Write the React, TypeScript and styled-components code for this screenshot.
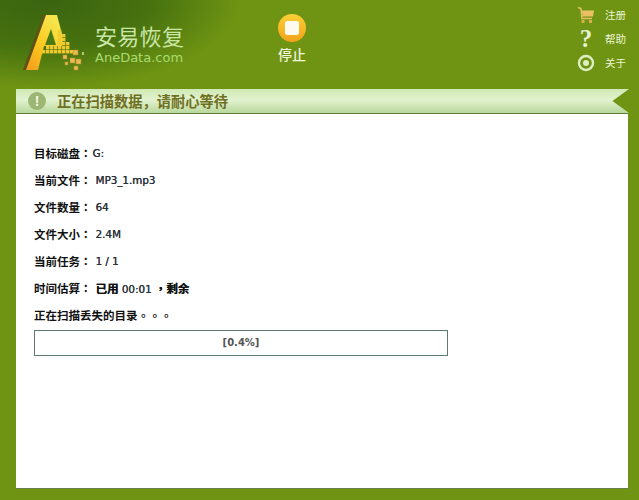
import { createGlobalStyle, styled } from 'styled-components';
import * as React from 'react';

const GlobalStyle = createGlobalStyle`
  html, body {
    margin: 0;
    padding: 0;
    background: #6f9413;
  }
`;

const CJK = `"Noto Sans CJK SC", "Liberation Sans", sans-serif`;
const CJK_TC = `"Noto Sans CJK TC", "Noto Sans CJK SC", sans-serif`;

// the right leg of the A breaks up into a grid of small squares
const GRID: [number, number][] = [
  [58, 30], [58, 34], [62, 34], [58, 38], [62, 38], [58, 42], [62, 42], [66, 42],
  [46, 46], [50, 46], [54, 46], [58, 46], [62, 46], [66, 46], [42, 50], [46, 50], [50, 50], [54, 50], [58, 50], [62, 50], [66, 50], [70, 50],
];

const SCATTER: [number, number, number][] = [
  [73, 50, 5], [63, 55, 4], [70, 58, 5], [76, 59, 5], [65, 62, 3], [74, 66, 4],
];

const LogoMark = () => (
  <LogoSvg viewBox="0 0 84 72" width="84" height="72">
    <defs>
      <linearGradient id="logoFill" x1="0" y1="1" x2="0.6" y2="0">
        <stop offset="0" stopColor="#f49a1e" />
        <stop offset="0.5" stopColor="#fbc81e" />
        <stop offset="1" stopColor="#f6e44c" />
      </linearGradient>
    </defs>
    <path d="M23 70 L43 15 L48 15 L28 70 Z" fill="#5e5216" />
    <path d="M26 70 L46 15 L57 15 L62 34 L62 46 L44 46 L38 70 Z" fill="url(#logoFill)" />
    <path d="M45 45 L51 29 L56 45 Z" fill="#4c7a12" />
    {GRID.map(([x, y]) => (
      <rect key={`${x}-${y}`} x={x} y={y} width={3.4} height={3.4} fill="#f2c92c" />
    ))}
    {SCATTER.map(([x, y, s]) => (
      <rect key={`${x}-${y}`} x={x} y={y} width={s} height={s} fill="#ecb850" stroke="#a9912f" strokeWidth="0.5" />
    ))}
    <rect x="82" y="52" width="2" height="3" fill="#b7c96a" />
  </LogoSvg>
);

const CartIcon = () => (
  <svg viewBox="0 0 18 18" width="18" height="18">
    <path d="M1 1.5 L4 2.5 L5 12.5 L15 12.5" fill="none" stroke="#e6c063" strokeWidth="1.6" />
    <path d="M5 4.5 H17 L16 10.5 H5.5 Z" fill="#e9c164" />
    <rect x="4.5" y="14" width="3" height="3" fill="#d9ae4e" />
    <rect x="12" y="14" width="3" height="3" fill="#d9ae4e" />
  </svg>
);

const HelpIcon = () => <HelpGlyph>?</HelpGlyph>;

const AboutIcon = () => (
  <svg viewBox="0 0 18 18" width="18" height="18">
    <circle cx="9" cy="9" r="7" fill="none" stroke="#dfeec2" strokeWidth="2.4" />
    <circle cx="9" cy="9" r="3" fill="#dfeec2" />
  </svg>
);

const INFO_ROWS: { label: string; value: string; gap?: boolean }[] = [
  { label: '目标磁盘：', value: 'G:' },
  { label: '当前文件：', value: 'MP3_1.mp3', gap: true },
  { label: '文件数量：', value: '64', gap: true },
  { label: '文件大小：', value: '2.4M', gap: true },
  { label: '当前任务：', value: '1 / 1', gap: true },
];

const App: React.FC = () => {
  return (
    <Page>
      <GlobalStyle />
      <Header>
        <Brand>
          <LogoMark />
          <BrandText>
            <BrandName>安易恢复</BrandName>
            <BrandUrl>AneData.com</BrandUrl>
          </BrandText>
        </Brand>
        <StopButton>
          <StopCircle>
            <StopSquare />
          </StopCircle>
          <StopLabel>停止</StopLabel>
        </StopButton>
        <SideMenu>
          <MenuItem>
            <MenuIcon>
              <CartIcon />
            </MenuIcon>
            注册
          </MenuItem>
          <MenuItem>
            <MenuIcon>
              <HelpIcon />
            </MenuIcon>
            帮助
          </MenuItem>
          <MenuItem>
            <MenuIcon>
              <AboutIcon />
            </MenuIcon>
            关于
          </MenuItem>
        </SideMenu>
      </Header>
      <Banner>
        <Notice>!</Notice>
        <BannerText>正在扫描数据，请耐心等待</BannerText>
      </Banner>
      <Panel>
        {INFO_ROWS.map((row) => (
          <Row key={row.label}>
            <Label>{row.label}</Label>
            <Value $gap={row.gap}>{row.value}</Value>
          </Row>
        ))}
        <Row>
          <Label>时间估算：</Label>
          <Value $gap>
            <Label>已用</Label> 00:01 <Label>，剩余</Label>
          </Value>
        </Row>
        <Row>
          <Label>正在扫描丢失的目录。。。</Label>
        </Row>
        <Progress>[0.4%]</Progress>
      </Panel>
    </Page>
  );
};

const Page = styled.div`
  width: 639px;
  height: 500px;
  overflow: hidden;
  display: flex;
  flex-direction: column;
  background: #6f9413;
`;

const Header = styled.header`
  height: 89px;
  flex-shrink: 0;
  box-sizing: border-box;
  display: flex;
  align-items: flex-start;
  background:
    radial-gradient(ellipse 195px 88px at 45px 0, #3a6410 0%, #47720f 55%, rgba(111, 148, 19, 0) 100%),
    #6f9413;
`;

const Brand = styled.div`
  width: 264px;
  display: flex;
`;

const LogoSvg = styled.svg`
  flex-shrink: 0;
  width: 84px;
  height: 72px;
`;

const BrandText = styled.div`
  margin-left: 11px;
  padding-top: 21px;
  display: flex;
  flex-direction: column;
`;

const BrandName = styled.div`
  color: #c9e6a4;
  font: 400 22px / 28px ${CJK};
  letter-spacing: 0.3px;
  white-space: nowrap;
`;

const BrandUrl = styled.div`
  color: #a9dc72;
  font: 400 13px / 15px 'DejaVu Sans', sans-serif;
  margin-top: 1px;
  white-space: nowrap;
`;

const StopButton = styled.div`
  width: 56px;
  padding-top: 14px;
  display: flex;
  flex-direction: column;
  align-items: center;
`;

const StopCircle = styled.div`
  width: 28px;
  height: 28px;
  box-sizing: border-box;
  border-radius: 50%;
  display: flex;
  align-items: center;
  justify-content: center;
  background: linear-gradient(180deg, #fbd036 0%, #f2a31a 100%);
`;

const StopSquare = styled.div`
  width: 14px;
  height: 14px;
  border-radius: 2px;
  background: #fdfbf0;
`;

const StopLabel = styled.div`
  margin-top: 3px;
  color: #f2f6dc;
  font: 500 14px / 18px ${CJK};
`;

const SideMenu = styled.nav`
  margin-left: auto;
  width: 50px;
  margin-right: 12px;
  padding-top: 3px;
  display: flex;
  flex-direction: column;
`;

const MenuItem = styled.div`
  height: 24px;
  display: flex;
  align-items: center;
  color: #eef4d6;
  font: 400 10.5px / 24px ${CJK};
  white-space: nowrap;
`;

const MenuIcon = styled.span`
  width: 18px;
  height: 18px;
  margin-right: 10px;
  display: flex;
  align-items: center;
  justify-content: center;
  flex-shrink: 0;
`;

const HelpGlyph = styled.span`
  color: #e6f0cf;
  font: 700 25px / 18px 'Liberation Serif', serif;
`;

const Banner = styled.div`
  width: 613px;
  height: 24px;
  margin-left: 16px;
  flex-shrink: 0;
  box-sizing: border-box;
  padding-left: 12px;
  display: flex;
  align-items: center;
  background: linear-gradient(180deg, #cfe9b4 0%, #e2f2cf 45%, #b9d89c 100%);
  clip-path: polygon(0 0, 100% 0, 97.3% 50%, 100% 100%, 0 100%);
`;

const Notice = styled.span`
  width: 18px;
  height: 18px;
  border-radius: 50%;
  display: flex;
  align-items: center;
  justify-content: center;
  background: #9cb673;
  color: #f4f8e6;
  font: 700 14px / 18px 'Liberation Sans', sans-serif;
`;

const BannerText = styled.span`
  margin-left: 11px;
  color: #6f6f22;
  font: 600 14.25px / 24px ${CJK};
  white-space: nowrap;
`;

const Panel = styled.main`
  width: 612px;
  height: 376px;
  margin-left: 16px;
  flex-shrink: 0;
  box-sizing: border-box;
  padding: 26px 18px 0;
  background: #ffffff;
  border-top: 1px solid #5e7a3a;
  border-bottom: 1px solid #6b7f4a;
`;

const Row = styled.div`
  height: 27px;
  display: flex;
  align-items: center;
  color: #1a1a1a;
  white-space: pre;
`;

const Label = styled.span`
  color: #111111;
  font: 700 11.5px / 27px ${CJK_TC};
`;

const Value = styled.span<{ $gap?: boolean }>`
  margin-left: ${({ $gap }) => ($gap ? '4px' : '1px')};
  color: #2a3038;
  font: 400 10.3px / 27px 'DejaVu Sans', sans-serif;
  text-shadow: 0.3px 0 0 currentColor;
`;

const Progress = styled.div`
  width: 414px;
  height: 26px;
  margin-top: 1px;
  box-sizing: border-box;
  border: 1px solid #5f7a70;
  display: flex;
  align-items: center;
  justify-content: center;
  color: #555555;
  font: 700 10px / 24px 'DejaVu Sans', sans-serif;
`;

export default App;
